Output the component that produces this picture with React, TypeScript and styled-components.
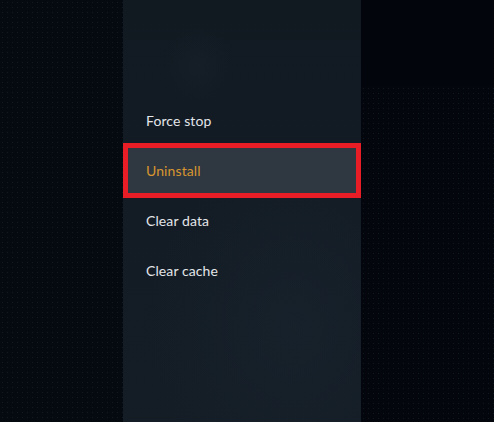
import React from "react";
import styled, { createGlobalStyle, css } from "styled-components";

const Global = createGlobalStyle`
  html, body { margin: 0; padding: 0; background: #04080e; }
  body { font-family: Lato, "Open Sans", sans-serif; }
  #root { height: 422px; }
`;

const dots = css`
  background-color: #050a11;
  background-image: radial-gradient(circle, rgba(50, 66, 84, 0.28) 0.6px, transparent 1px);
  background-size: 5px 5px;
`;

const Page = styled.div`
  display: flex;
  height: 422px;
  width: 100%;
  overflow: hidden;
`;

const LeftPane = styled.div`
  width: 123px;
  flex: none;
  ${dots}
`;

const Panel = styled.div`
  width: 238px;
  flex: none;
  background:
    radial-gradient(ellipse 45px 50px at 75px 65px, rgba(26, 36, 46, 0.45), transparent 75%),
    radial-gradient(ellipse 180px 220px at 170px 330px, rgba(26, 37, 47, 0.55), transparent 80%),
    linear-gradient(180deg, #111921 0%, #131c25 45%, #141d26 100%);
`;

const Menu = styled.ul`
  list-style: none;
  margin: 0;
  padding: 95px 0 0;
  display: flex;
  flex-direction: column;
`;

const Item = styled.li<{ $focused?: boolean }>`
  display: flex;
  align-items: center;
  box-sizing: border-box;
  height: 50px;
  padding-left: 23px;
  font-size: 14px;
  letter-spacing: 0.1px;
  color: #e3e6ea;
  ${(p) =>
    p.$focused &&
    css`
      height: 55px;
      margin: -2px 0 -3px;
      padding-left: 18px;
      border: 5px solid #e81d25;
      background: #2f3741;
      color: #d7962f;
    `}
`;

const RightPane = styled.div`
  flex: 1;
  display: flex;
  flex-direction: column;
`;

const RightTop = styled.div`
  height: 86px;
  background: #02060c;
`;

const RightBottom = styled.div`
  flex: 1;
  ${dots}
  background-color: #03070d;
`;

export default function App() {
  const items = ["Force stop", "Uninstall", "Clear data", "Clear cache"];
  return (
    <>
      <Global />
      <Page>
        <LeftPane />
        <Panel>
          <Menu>
            {items.map((t) => (
              <Item key={t} $focused={t === "Uninstall"}>
                {t}
              </Item>
            ))}
          </Menu>
        </Panel>
        <RightPane>
          <RightTop />
          <RightBottom />
        </RightPane>
      </Page>
    </>
  );
}
